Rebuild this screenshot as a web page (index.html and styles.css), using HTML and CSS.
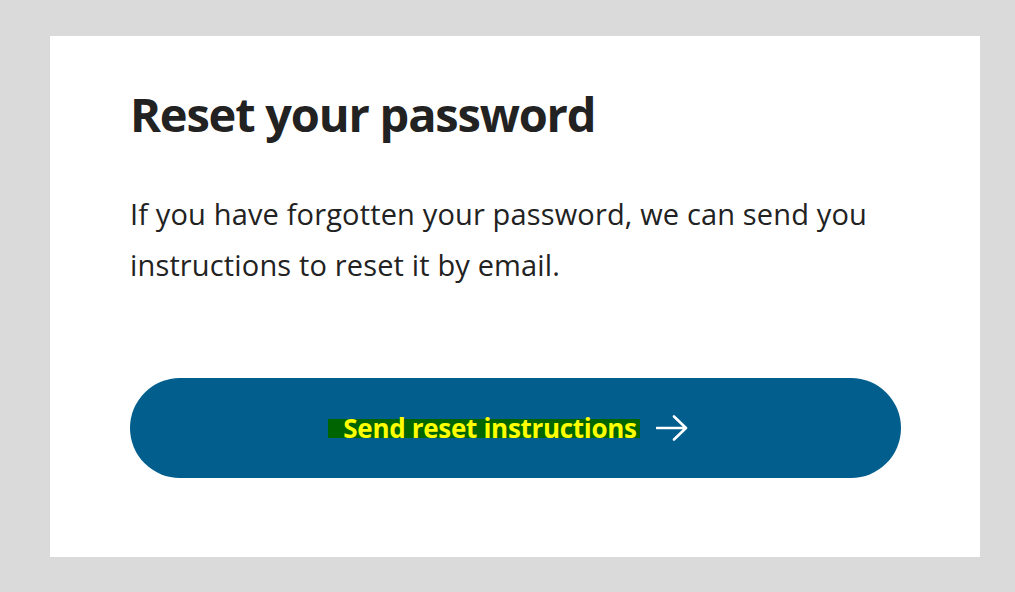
FILE: index.html
```html
<!DOCTYPE html>
<html lang="en">
<head>
<meta charset="utf-8">
<title>Reset your password</title>
<link rel="stylesheet" href="styles.css">
</head>
<body>
<main class="card">
  <h1 class="title">Reset your password</h1>
  <p class="lead">If you have forgotten your password, we can send you instructions to reset it by email.</p>
  <button class="btn" type="button">
    <span class="btn-label">Send reset instructions</span>
    <svg class="btn-arrow" width="32" height="26" viewBox="0 0 32 26" aria-hidden="true">
      <path d="M1 13 H30 M18 1.5 L30 13 L18 24.5" fill="none" stroke="#fff" stroke-width="2.6" stroke-linecap="round" stroke-linejoin="round"/>
    </svg>
  </button>
</main>
</body>
</html>
```
FILE: styles.css
```css
html, body {
  margin: 0;
  height: 100%;
}
body {
  background: #dadada;
  padding: 36px 35px 35px 50px;
  box-sizing: border-box;
  font-family: "Open Sans", "Noto Sans", sans-serif;
  color: #222;
}
.card {
  background: #fff;
  height: 521px;
  box-sizing: border-box;
  padding: 49px 79px 79px 80px;
  display: flex;
  flex-direction: column;
}
.title {
  margin: 0;
  font-size: 47px;
  line-height: 58px;
  font-weight: 700;
  letter-spacing: -1.2px;
}
.lead {
  margin: 45px 0 0;
  font-size: 29px;
  line-height: 51px;
  font-weight: 400;
  letter-spacing: 0.15px;
}
.btn {
  margin-top: auto;
  height: 100px;
  width: 100%;
  border: 0;
  border-radius: 50px;
  background: #025e8d;
  display: flex;
  align-items: center;
  justify-content: center;
  gap: 16px;
  font-family: inherit;
  cursor: pointer;
  padding: 0;
}
.btn-label {
  display: inline-block;
  background: #006400;
  color: #ffff00;
  font-size: 26px;
  font-weight: 700;
  height: 19px;
  line-height: 19px;
  padding: 0 3px 0 15px;
  margin-left: -15px;
  white-space: nowrap;
  letter-spacing: -0.3px;
}
.btn-arrow {
  display: block;
  flex: none;
}
```
